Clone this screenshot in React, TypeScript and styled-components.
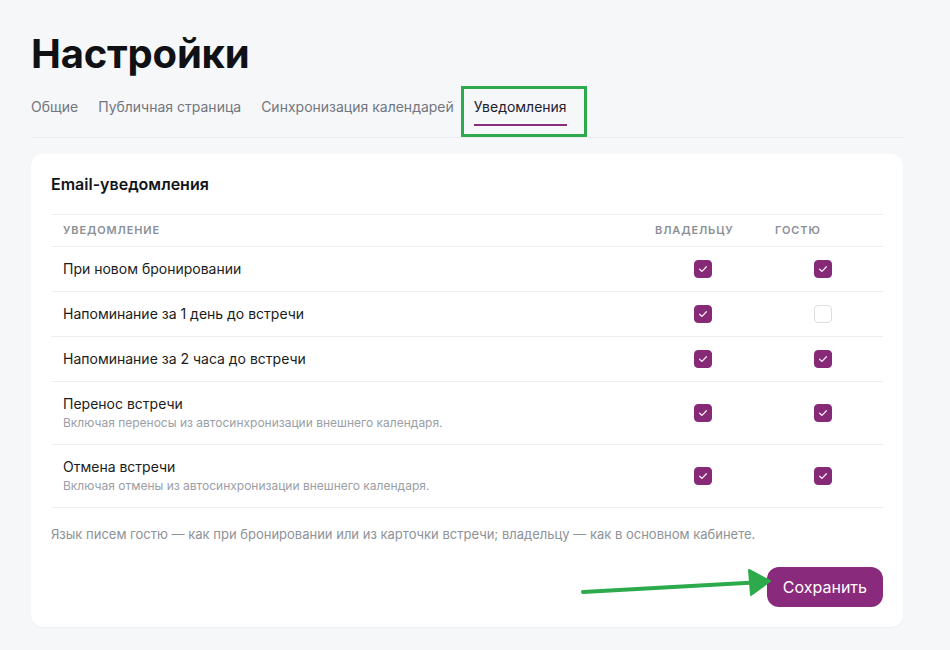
import React, { useState } from "react";
import styled, { createGlobalStyle } from "styled-components";

const GlobalStyle = createGlobalStyle`
  html, body {
    margin: 0;
    padding: 0;
    background: #f6f7f9;
    font-family: Inter, "Noto Sans", "Liberation Sans", sans-serif;
    color: #15171c;
  }
  * { box-sizing: border-box; }
`;

const Page = styled.div`
  position: relative;
  width: 950px;
  min-height: 650px;
  padding: 30px 47px 24px 31px;
`;

const Title = styled.h1`
  margin: 0;
  font-size: 40px;
  line-height: 48px;
  font-weight: 700;
  letter-spacing: -0.2px;
  color: #0f1115;
`;

const TabBar = styled.nav`
  display: flex;
  gap: 20px;
  margin-top: 13px;
  border-bottom: 1px solid #e9ebef;
`;

const Tab = styled.button<{ $active?: boolean; $marked?: boolean }>`
  position: relative;
  padding: 6px 0 7px;
  margin-bottom: 11px;
  border: none;
  border-bottom: 2px solid ${(p) => (p.$active ? "#8a2c7c" : "transparent")};
  background: none;
  font-family: inherit;
  font-size: 14px;
  line-height: 20px;
  color: ${(p) => (p.$active ? "#1d2030" : "#72767e")};
  cursor: pointer;

  &::after {
    content: "";
    display: ${(p) => (p.$marked ? "block" : "none")};
    position: absolute;
    left: -13px;
    right: -20px;
    top: -5px;
    bottom: -13px;
    border: 3px solid #2daa4b;
    pointer-events: none;
  }
`;

const Card = styled.section`
  margin-top: 16px;
  background: #ffffff;
  border-radius: 12px;
  padding: 20px;
  box-shadow: 0 1px 2px rgba(20, 24, 35, 0.04);
`;

const CardTitle = styled.h2`
  margin: 0 0 20px;
  font-size: 16px;
  line-height: 20px;
  font-weight: 600;
  color: #121418;
`;

const Table = styled.div`
  border-top: 1px solid #eceef1;
`;

const Row = styled.div<{ $head?: boolean }>`
  display: grid;
  grid-template-columns: 1fr 120px 120px;
  align-items: center;
  border-bottom: 1px solid #eceef1;
  padding: ${(p) => (p.$head ? "6px 0" : "12px 0")};
`;

const HeadCell = styled.div`
  padding: 0 12px;
  font-size: 11px;
  line-height: 19px;
  font-weight: 600;
  letter-spacing: 0.08em;
  text-transform: uppercase;
  color: #8b8f97;
`;

const Label = styled.div`
  padding: 0 12px;
`;

const LabelText = styled.div`
  font-size: 14px;
  line-height: 20px;
  color: #1a1c22;
`;

const LabelHint = styled.div`
  font-size: 12px;
  line-height: 18px;
  color: #9a9ea6;
`;

const CheckCell = styled.div`
  display: flex;
  justify-content: center;
`;

const Box = styled.button<{ $on: boolean }>`
  width: 18px;
  height: 18px;
  padding: 0;
  border-radius: 4px;
  border: 1px solid ${(p) => (p.$on ? "#862a78" : "#dcdee3")};
  background: ${(p) => (p.$on ? "#862a78" : "#ffffff")};
  display: flex;
  align-items: center;
  justify-content: center;
  cursor: pointer;
`;

const Note = styled.p`
  margin: 17px 0 0;
  font-size: 13px;
  line-height: 18px;
  color: #8e9299;
`;

const Actions = styled.div`
  display: flex;
  justify-content: flex-end;
  margin-top: 24px;
`;

const SaveButton = styled.button`
  height: 40px;
  padding: 0 16px;
  border: none;
  border-radius: 12px;
  background: #8a2a7c;
  color: #ffffff;
  font-family: inherit;
  font-size: 16px;
  font-weight: 400;
  cursor: pointer;
`;

const Pointer = styled.svg`
  position: absolute;
  left: 578px;
  top: 565px;
  pointer-events: none;
`;

type Item = {
  title: string;
  hint?: string;
  owner: boolean;
  guest: boolean;
};

const initial: Item[] = [
  { title: "При новом бронировании", owner: true, guest: true },
  { title: "Напоминание за 1 день до встречи", owner: true, guest: false },
  { title: "Напоминание за 2 часа до встречи", owner: true, guest: true },
  {
    title: "Перенос встречи",
    hint: "Включая переносы из автосинхронизации внешнего календаря.",
    owner: true,
    guest: true,
  },
  {
    title: "Отмена встречи",
    hint: "Включая отмены из автосинхронизации внешнего календаря.",
    owner: true,
    guest: true,
  },
];

const tabs = ["Общие", "Публичная страница", "Синхронизация календарей", "Уведомления"];

const Check = ({ on, onClick }: { on: boolean; onClick: () => void }) => (
  <Box $on={on} onClick={onClick}>
    {on && (
      <svg width="12" height="12" viewBox="0 0 12 12" fill="none">
        <path
          d="M2.6 6.2L5 8.4L9.4 3.8"
          stroke="#f3e6f0"
          strokeWidth="1.3"
          strokeLinecap="round"
          strokeLinejoin="round"
        />
      </svg>
    )}
  </Box>
);

export default function App() {
  const [items, setItems] = useState(initial);
  const [tab, setTab] = useState(3);

  const toggle = (i: number, key: "owner" | "guest") =>
    setItems((list) =>
      list.map((it, j) => (j === i ? { ...it, [key]: !it[key] } : it))
    );

  return (
    <Page>
      <GlobalStyle />
      <Title>Настройки</Title>
      <TabBar>
        {tabs.map((t, i) => (
          <Tab key={t} $active={i === tab} $marked={i === 3} onClick={() => setTab(i)}>
            {t}
          </Tab>
        ))}
      </TabBar>

      <Card>
        <CardTitle>Email-уведомления</CardTitle>
        <Table>
          <Row $head>
            <HeadCell>Уведомление</HeadCell>
            <HeadCell>Владельцу</HeadCell>
            <HeadCell>Гостю</HeadCell>
          </Row>
          {items.map((it, i) => (
            <Row key={it.title}>
              <Label>
                <LabelText>{it.title}</LabelText>
                {it.hint && <LabelHint>{it.hint}</LabelHint>}
              </Label>
              <CheckCell>
                <Check on={it.owner} onClick={() => toggle(i, "owner")} />
              </CheckCell>
              <CheckCell>
                <Check on={it.guest} onClick={() => toggle(i, "guest")} />
              </CheckCell>
            </Row>
          ))}
        </Table>
        <Note>
          Язык писем гостю — как при бронировании или из карточки встречи; владельцу — как в основном кабинете.
        </Note>
        <Actions>
          <SaveButton>Сохранить</SaveButton>
        </Actions>
      </Card>

      {/* green arrow pointing at the save button */}
      <Pointer width="200" height="40" viewBox="0 0 200 40">
        <path d="M5 27 L176 17.5" stroke="#2daa4b" strokeWidth="4" strokeLinecap="round" />
        <path d="M171 5 L192 16 L173 30 Z" fill="#2daa4b" stroke="#2daa4b" strokeWidth="2" strokeLinejoin="round" />
      </Pointer>
    </Page>
  );
}
